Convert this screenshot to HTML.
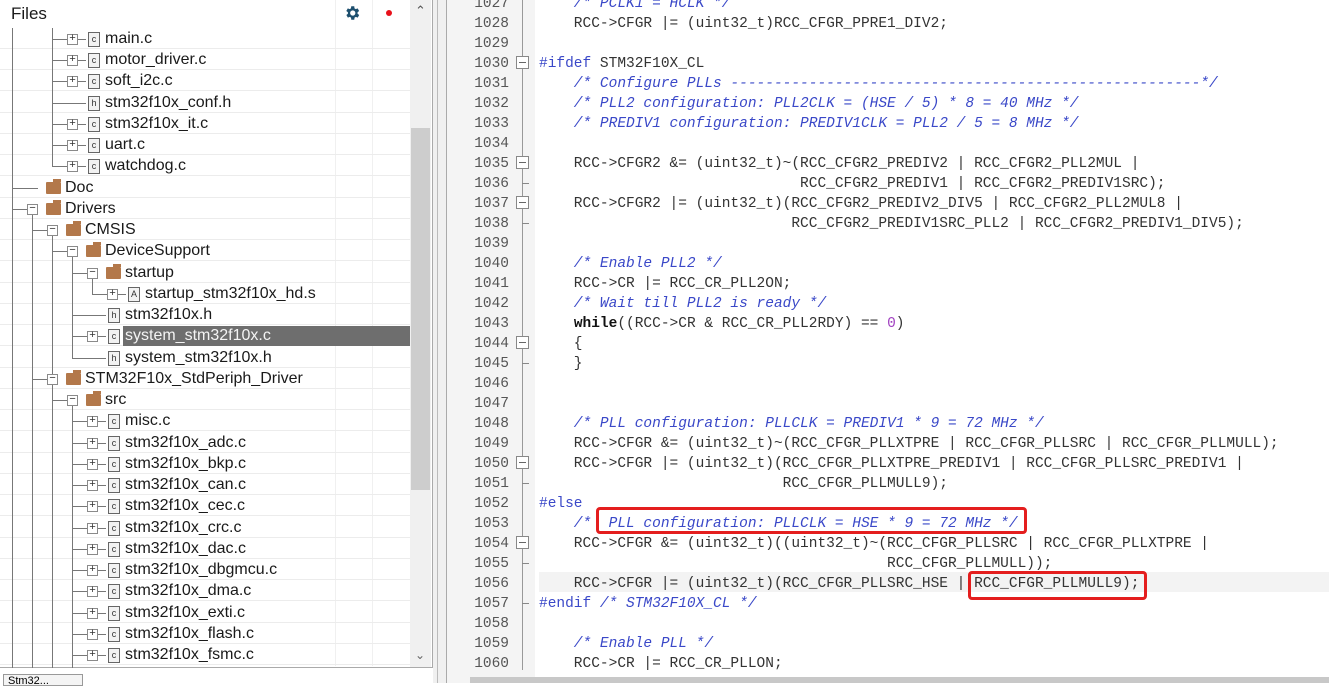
<!DOCTYPE html>
<html><head><meta charset="utf-8"><style>
*{margin:0;padding:0;box-sizing:border-box}
body{width:1329px;height:683px;overflow:hidden;background:#fff;position:relative;font-family:"Liberation Sans",sans-serif}
.a{position:absolute}
.row{position:absolute;left:0;width:410px;height:21px;border-bottom:1px solid #ececec}
.t{position:absolute;font-size:16px;color:#1a1a1a;line-height:22px;white-space:nowrap}
.bx{position:absolute;width:11px;height:11px;border:1px solid #8a8a8a;background:#fff;font-size:11px;line-height:9px;text-align:center;color:#333;font-family:"Liberation Mono",monospace}
.fi{position:absolute;width:12px;height:15px;border:1px solid #666;background:#f2f2f2;font-size:9px;line-height:13px;text-align:center;color:#333}
.fo{position:absolute;width:15px;height:12px;background:#b3784a;border-radius:1px}
.fo:before{content:"";position:absolute;left:7px;top:-3px;width:8px;height:3px;background:#b3784a}
.hl{position:absolute;height:1px;background:#777}
.vl{position:absolute;width:1px;background:#777}
.code{position:absolute;left:539px;font-family:"Liberation Mono",monospace;font-size:14.5px;line-height:20px;white-space:pre;color:#333}
.ln{position:absolute;left:447px;width:62px;text-align:right;font-family:"Liberation Mono",monospace;font-size:14.5px;line-height:20px;color:#555}
.cm{color:#3a48c8;font-style:italic}
.pp{color:#3a48c8}
.fb{position:absolute;left:516px;width:13px;height:13px;border:1px solid #888;background:#fff}
.fb:after{content:"";position:absolute;left:2px;top:5px;width:7px;height:1px;background:#666}
.tk{position:absolute;left:522px;width:7px;height:1px;background:#888}
</style></head><body>

<div class="a" style="left:0;top:0;width:433px;height:668px;border-right:1px solid #aaa;border-bottom:1px solid #aaa"></div>
<div class="t" style="left:11px;top:3px;font-size:17px">Files</div>
<div class="a" style="left:335px;top:0;width:1px;height:666px;background:#f0f0f0"></div>
<div class="a" style="left:372px;top:0;width:1px;height:666px;background:#f0f0f0"></div>
<svg class="a" style="left:343px;top:4px" width="18" height="18" viewBox="0 0 24 24"><path fill="#1d4f6e" d="M19.4 13a7.5 7.5 0 0 0 0-2l2.1-1.6-2-3.5-2.5 1a7.4 7.4 0 0 0-1.7-1L15 3h-4l-.4 2.9a7.4 7.4 0 0 0-1.7 1l-2.5-1-2 3.5L6.6 11a7.5 7.5 0 0 0 0 2l-2.1 1.6 2 3.5 2.5-1a7.4 7.4 0 0 0 1.7 1L11 21h4l.4-2.9a7.4 7.4 0 0 0 1.7-1l2.5 1 2-3.5zM13 15.5a3.5 3.5 0 1 1 0-7 3.5 3.5 0 0 1 0 7z"/></svg>
<div class="a" style="left:386px;top:10px;width:6px;height:6px;border-radius:50%;background:#e8101a"></div>
<div class="a" style="left:410px;top:0;width:21px;height:667px;background:#f0f0f0"></div>
<div class="a" style="left:411px;top:128px;width:19px;height:362px;background:#cdcdcd"></div>
<div class="a" style="left:415px;top:3px;font-size:13px;color:#555">&#8963;</div>
<div class="a" style="left:415px;top:648px;font-size:12px;color:#666">&#8964;</div>
<div class="a" style="left:433px;top:0;width:14px;height:683px;background:#f0f0f0;border-right:1px solid #aaa"></div>
<div class="a" style="left:437px;top:0;width:1px;height:683px;background:#bbb"></div>
<div class="a" style="left:3px;top:674px;width:80px;height:12px;border:1px solid #999;background:#f4f4f4;font-size:11px;padding-left:4px;line-height:12px">Stm32...</div>

<div class="row" style="top:28px"></div><div class="row" style="top:49px"></div><div class="row" style="top:70px"></div><div class="row" style="top:92px"></div><div class="row" style="top:113px"></div><div class="row" style="top:134px"></div><div class="row" style="top:155px"></div><div class="row" style="top:177px"></div><div class="row" style="top:198px"></div><div class="row" style="top:219px"></div><div class="row" style="top:240px"></div><div class="row" style="top:262px"></div><div class="row" style="top:283px"></div><div class="row" style="top:304px"></div><div class="row" style="top:325px"></div><div class="row" style="top:347px"></div><div class="row" style="top:368px"></div><div class="row" style="top:389px"></div><div class="row" style="top:410px"></div><div class="row" style="top:432px"></div><div class="row" style="top:453px"></div><div class="row" style="top:474px"></div><div class="row" style="top:495px"></div><div class="row" style="top:517px"></div><div class="row" style="top:538px"></div><div class="row" style="top:559px"></div><div class="row" style="top:580px"></div><div class="row" style="top:602px"></div><div class="row" style="top:623px"></div><div class="row" style="top:644px"></div>

<div class="a" style="left:123px;top:326px;width:287px;height:20px;background:#6e6e6e"></div>

<div class="vl" style="left:12px;top:28px;height:640px"></div>
<div class="vl" style="left:52px;top:28px;height:138px"></div>
<div class="vl" style="left:32px;top:209px;height:459px"></div>
<div class="vl" style="left:52px;top:230px;height:149px"></div>
<div class="vl" style="left:72px;top:251px;height:107px"></div>
<div class="vl" style="left:92px;top:273px;height:21px"></div>
<div class="vl" style="left:52px;top:379px;height:289px"></div>
<div class="vl" style="left:72px;top:400px;height:268px"></div>

<div class="hl" style="left:52px;top:39px;width:34px"></div><div class="bx" style="left:67px;top:34px">+</div><div class="fi" style="left:88px;top:32px">c</div><div class="t" style="left:105px;top:28px">main.c</div>
<div class="hl" style="left:52px;top:60px;width:34px"></div><div class="bx" style="left:67px;top:55px">+</div><div class="fi" style="left:88px;top:53px">c</div><div class="t" style="left:105px;top:49px">motor_driver.c</div>
<div class="hl" style="left:52px;top:81px;width:34px"></div><div class="bx" style="left:67px;top:76px">+</div><div class="fi" style="left:88px;top:74px">c</div><div class="t" style="left:105px;top:70px">soft_i2c.c</div>
<div class="hl" style="left:52px;top:103px;width:34px"></div><div class="fi" style="left:88px;top:96px">h</div><div class="t" style="left:105px;top:92px">stm32f10x_conf.h</div>
<div class="hl" style="left:52px;top:124px;width:34px"></div><div class="bx" style="left:67px;top:119px">+</div><div class="fi" style="left:88px;top:117px">c</div><div class="t" style="left:105px;top:113px">stm32f10x_it.c</div>
<div class="hl" style="left:52px;top:145px;width:34px"></div><div class="bx" style="left:67px;top:140px">+</div><div class="fi" style="left:88px;top:138px">c</div><div class="t" style="left:105px;top:134px">uart.c</div>
<div class="hl" style="left:52px;top:166px;width:34px"></div><div class="bx" style="left:67px;top:161px">+</div><div class="fi" style="left:88px;top:159px">c</div><div class="t" style="left:105px;top:155px">watchdog.c</div>
<div class="hl" style="left:12px;top:188px;width:26px"></div><div class="fo" style="left:46px;top:182px"></div><div class="t" style="left:65px;top:177px">Doc</div>
<div class="hl" style="left:12px;top:209px;width:26px"></div><div class="bx" style="left:27px;top:204px">&minus;</div><div class="fo" style="left:46px;top:203px"></div><div class="t" style="left:65px;top:198px">Drivers</div>
<div class="hl" style="left:32px;top:230px;width:26px"></div><div class="bx" style="left:47px;top:225px">&minus;</div><div class="fo" style="left:66px;top:224px"></div><div class="t" style="left:85px;top:219px">CMSIS</div>
<div class="hl" style="left:52px;top:251px;width:26px"></div><div class="bx" style="left:67px;top:246px">&minus;</div><div class="fo" style="left:86px;top:245px"></div><div class="t" style="left:105px;top:240px">DeviceSupport</div>
<div class="hl" style="left:72px;top:273px;width:26px"></div><div class="bx" style="left:87px;top:268px">&minus;</div><div class="fo" style="left:106px;top:267px"></div><div class="t" style="left:125px;top:262px">startup</div>
<div class="hl" style="left:92px;top:294px;width:34px"></div><div class="bx" style="left:107px;top:289px">+</div><div class="fi" style="left:128px;top:287px">A</div><div class="t" style="left:145px;top:283px">startup_stm32f10x_hd.s</div>
<div class="hl" style="left:72px;top:315px;width:34px"></div><div class="fi" style="left:108px;top:308px">h</div><div class="t" style="left:125px;top:304px">stm32f10x.h</div>
<div class="hl" style="left:72px;top:336px;width:34px"></div><div class="bx" style="left:87px;top:331px">+</div><div class="fi" style="left:108px;top:329px">c</div><div class="t" style="left:125px;top:325px;color:#f4f4f4">system_stm32f10x.c</div>
<div class="hl" style="left:72px;top:358px;width:34px"></div><div class="fi" style="left:108px;top:351px">h</div><div class="t" style="left:125px;top:347px">system_stm32f10x.h</div>
<div class="hl" style="left:32px;top:379px;width:26px"></div><div class="bx" style="left:47px;top:374px">&minus;</div><div class="fo" style="left:66px;top:373px"></div><div class="t" style="left:85px;top:368px">STM32F10x_StdPeriph_Driver</div>
<div class="hl" style="left:52px;top:400px;width:26px"></div><div class="bx" style="left:67px;top:395px">&minus;</div><div class="fo" style="left:86px;top:394px"></div><div class="t" style="left:105px;top:389px">src</div>
<div class="hl" style="left:72px;top:421px;width:34px"></div><div class="bx" style="left:87px;top:416px">+</div><div class="fi" style="left:108px;top:414px">c</div><div class="t" style="left:125px;top:410px">misc.c</div>
<div class="hl" style="left:72px;top:443px;width:34px"></div><div class="bx" style="left:87px;top:438px">+</div><div class="fi" style="left:108px;top:436px">c</div><div class="t" style="left:125px;top:432px">stm32f10x_adc.c</div>
<div class="hl" style="left:72px;top:464px;width:34px"></div><div class="bx" style="left:87px;top:459px">+</div><div class="fi" style="left:108px;top:457px">c</div><div class="t" style="left:125px;top:453px">stm32f10x_bkp.c</div>
<div class="hl" style="left:72px;top:485px;width:34px"></div><div class="bx" style="left:87px;top:480px">+</div><div class="fi" style="left:108px;top:478px">c</div><div class="t" style="left:125px;top:474px">stm32f10x_can.c</div>
<div class="hl" style="left:72px;top:506px;width:34px"></div><div class="bx" style="left:87px;top:501px">+</div><div class="fi" style="left:108px;top:499px">c</div><div class="t" style="left:125px;top:495px">stm32f10x_cec.c</div>
<div class="hl" style="left:72px;top:528px;width:34px"></div><div class="bx" style="left:87px;top:523px">+</div><div class="fi" style="left:108px;top:521px">c</div><div class="t" style="left:125px;top:517px">stm32f10x_crc.c</div>
<div class="hl" style="left:72px;top:549px;width:34px"></div><div class="bx" style="left:87px;top:544px">+</div><div class="fi" style="left:108px;top:542px">c</div><div class="t" style="left:125px;top:538px">stm32f10x_dac.c</div>
<div class="hl" style="left:72px;top:570px;width:34px"></div><div class="bx" style="left:87px;top:565px">+</div><div class="fi" style="left:108px;top:563px">c</div><div class="t" style="left:125px;top:559px">stm32f10x_dbgmcu.c</div>
<div class="hl" style="left:72px;top:591px;width:34px"></div><div class="bx" style="left:87px;top:586px">+</div><div class="fi" style="left:108px;top:584px">c</div><div class="t" style="left:125px;top:580px">stm32f10x_dma.c</div>
<div class="hl" style="left:72px;top:613px;width:34px"></div><div class="bx" style="left:87px;top:608px">+</div><div class="fi" style="left:108px;top:606px">c</div><div class="t" style="left:125px;top:602px">stm32f10x_exti.c</div>
<div class="hl" style="left:72px;top:634px;width:34px"></div><div class="bx" style="left:87px;top:629px">+</div><div class="fi" style="left:108px;top:627px">c</div><div class="t" style="left:125px;top:623px">stm32f10x_flash.c</div>
<div class="hl" style="left:72px;top:655px;width:34px"></div><div class="bx" style="left:87px;top:650px">+</div><div class="fi" style="left:108px;top:648px">c</div><div class="t" style="left:125px;top:644px">stm32f10x_fsmc.c</div>

<div class="a" style="left:447px;top:0;width:88px;height:683px;background:#f4f4f4"></div>
<div class="a" style="left:522px;top:0;width:1px;height:670px;background:#999"></div>
<div class="a" style="left:539px;top:572px;width:790px;height:20px;background:#f3f3f3"></div>
<div class="a" style="left:470px;top:677px;width:859px;height:6px;background:#c8c8c8"></div>

<div class="ln" style="top:-6px">1027<br>1028<br>1029<br>1030<br>1031<br>1032<br>1033<br>1034<br>1035<br>1036<br>1037<br>1038<br>1039<br>1040<br>1041<br>1042<br>1043<br>1044<br>1045<br>1046<br>1047<br>1048<br>1049<br>1050<br>1051<br>1052<br>1053<br>1054<br>1055<br>1056<br>1057<br>1058<br>1059<br>1060</div>

<div class="fb" style="top:56px"></div><div class="fb" style="top:156px"></div><div class="fb" style="top:196px"></div><div class="fb" style="top:336px"></div><div class="fb" style="top:456px"></div><div class="fb" style="top:536px"></div>
<div class="tk" style="top:183px"></div><div class="tk" style="top:223px"></div><div class="tk" style="top:363px"></div><div class="tk" style="top:483px"></div><div class="tk" style="top:563px"></div><div class="tk" style="top:603px"></div>

<div class="code" style="top:-6px"><span class="cm">    /* PCLK1 = HCLK */</span>
    RCC-&gt;CFGR |= (uint32_t)RCC_CFGR_PPRE1_DIV2;

<span class="pp">#ifdef</span> STM32F10X_CL
<span class="cm">    /* Configure PLLs ------------------------------------------------------*/</span>
<span class="cm">    /* PLL2 configuration: PLL2CLK = (HSE / 5) * 8 = 40 MHz */</span>
<span class="cm">    /* PREDIV1 configuration: PREDIV1CLK = PLL2 / 5 = 8 MHz */</span>

    RCC-&gt;CFGR2 &amp;= (uint32_t)~(RCC_CFGR2_PREDIV2 | RCC_CFGR2_PLL2MUL |
                              RCC_CFGR2_PREDIV1 | RCC_CFGR2_PREDIV1SRC);
    RCC-&gt;CFGR2 |= (uint32_t)(RCC_CFGR2_PREDIV2_DIV5 | RCC_CFGR2_PLL2MUL8 |
                             RCC_CFGR2_PREDIV1SRC_PLL2 | RCC_CFGR2_PREDIV1_DIV5);

<span class="cm">    /* Enable PLL2 */</span>
    RCC-&gt;CR |= RCC_CR_PLL2ON;
<span class="cm">    /* Wait till PLL2 is ready */</span>
    <b style="color:#111">while</b>((RCC-&gt;CR &amp; RCC_CR_PLL2RDY) == <span style="color:#a040c0">0</span>)
    {
    }


<span class="cm">    /* PLL configuration: PLLCLK = PREDIV1 * 9 = 72 MHz */</span>
    RCC-&gt;CFGR &amp;= (uint32_t)~(RCC_CFGR_PLLXTPRE | RCC_CFGR_PLLSRC | RCC_CFGR_PLLMULL);
    RCC-&gt;CFGR |= (uint32_t)(RCC_CFGR_PLLXTPRE_PREDIV1 | RCC_CFGR_PLLSRC_PREDIV1 |
                            RCC_CFGR_PLLMULL9);
<span class="pp">#else</span>
<span class="cm">    /*  PLL configuration: PLLCLK = HSE * 9 = 72 MHz */</span>
    RCC-&gt;CFGR &amp;= (uint32_t)((uint32_t)~(RCC_CFGR_PLLSRC | RCC_CFGR_PLLXTPRE |
                                        RCC_CFGR_PLLMULL));
    RCC-&gt;CFGR |= (uint32_t)(RCC_CFGR_PLLSRC_HSE | RCC_CFGR_PLLMULL9);
<span class="pp">#endif</span> <span class="cm">/* STM32F10X_CL */</span>

<span class="cm">    /* Enable PLL */</span>
    RCC-&gt;CR |= RCC_CR_PLLON;</div>

<div class="a" style="left:596px;top:507px;width:431px;height:27px;border:3px solid #e41e1e;border-radius:4px"></div>
<div class="a" style="left:968px;top:571px;width:179px;height:29px;border:3px solid #e41e1e;border-radius:4px"></div>
</body></html>
